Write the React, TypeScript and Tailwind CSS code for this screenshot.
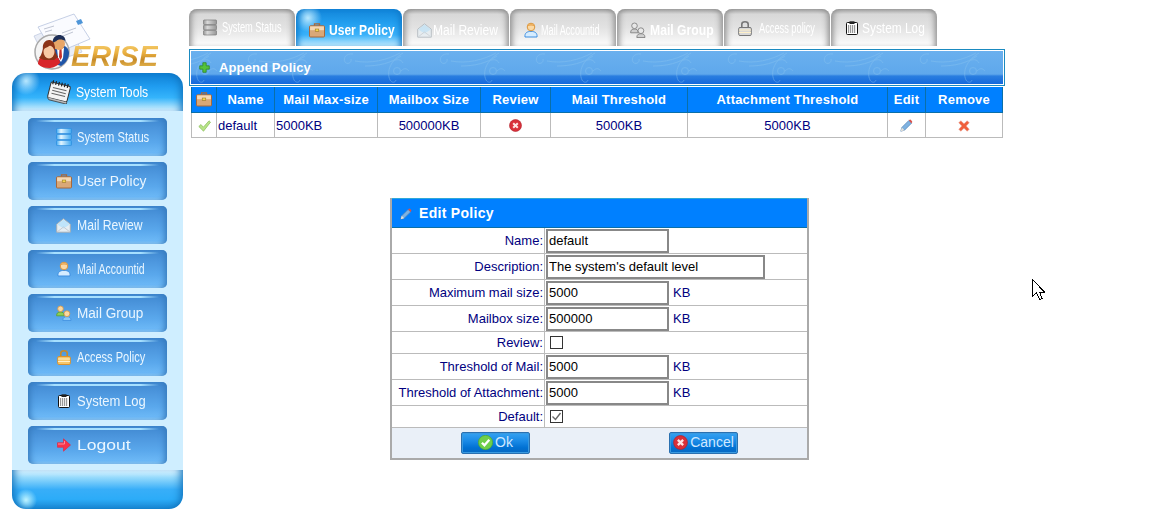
import React, { useId } from "react";

type IconProps = { className?: string };

const Database = ({ className = "w-[16px] h-[18px]", top = "#e4f6ff", mid = "#3fa8f2", edge = "#2a8ee0" }: IconProps & { top?: string; mid?: string; edge?: string }) => {
  const id = useId();
  return (
    <svg viewBox="0 0 16 18" className={className}>
      <defs>
        <linearGradient id={id} x1="0" x2="1" y1="0" y2="0">
          <stop offset="0" stopColor={mid} />
          <stop offset="0.3" stopColor={top} />
          <stop offset="1" stopColor={mid} />
        </linearGradient>
      </defs>
      {[0, 6, 12].map((y) => (
        <rect key={y} x="0.500" y={y + 0.400} width="15" height="5.200" rx="1" fill={`url(#${id})`} stroke={edge} strokeWidth="0.700" />
      ))}
    </svg>
  );
};

const Briefcase = ({ className = "w-[16px] h-[16px]" }: IconProps) => (
  <svg viewBox="0 0 16 16" className={className}>
    <path d="M5.500 3.800V1.800h5v2" fill="none" stroke="#a8683a" strokeWidth="1.300" />
    <rect x="0.500" y="3.800" width="15" height="11.200" rx="1" fill="#d9a878" stroke="#a8683a" />
    <rect x="1.100" y="4.400" width="13.800" height="3.800" fill="#f4d8b4" />
    <rect x="6.200" y="7" width="3.600" height="2.300" fill="#f7d84a" stroke="#8a6a20" strokeWidth="0.500" />
  </svg>
);

const Envelope = ({ className = "w-[15px] h-[15px]" }: IconProps) => (
  <svg viewBox="0 0 15 15" className={className}>
    <path d="M0.700 6.200 7.500 0.800l6.800 5.400v8H0.700z" fill="#e6eef3" stroke="#a5aeb5" />
    <path d="M1.200 6.400 7.500 10.600l6.300-4.200L7.500 1.400z" fill="#bfe4fa" />
    <path d="M1 14 7.500 9l6.500 5" fill="none" stroke="#c5ccd2" />
  </svg>
);

const User = ({ className = "w-[14px] h-[16px]" }: IconProps) => (
  <svg viewBox="0 0 14 16" className={className}>
    <path d="M1 15c-.5-4 2-5.600 6-5.600s6.500 1.600 6 5.600z" fill="#d5ecff" stroke="#3f8fe0" />
    <circle cx="7" cy="5" r="3.800" fill="#fbd9a4" stroke="#d9963f" />
    <path d="M3.400 4.200C4 1.600 10 1.600 10.600 4.200 8.500 3.200 5.500 3.200 3.400 4.200z" fill="#e8a24a" />
  </svg>
);

const Group = ({ className = "w-[16px] h-[16px]", a = "#8ccf55", b = "#8cc8f5", s1 = "#5a9f2a", s2 = "#3f8fe0", face = "#fbd9a4", fs = "#d9963f" }: IconProps & { a?: string; b?: string; s1?: string; s2?: string; face?: string; fs?: string }) => (
  <svg viewBox="0 0 16 16" className={className}>
    <path d="M.6 10.800c0-3 1.600-3.800 3.800-3.800s3.800.8 3.800 3.800z" fill={a} stroke={s1} strokeWidth=".8" />
    <circle cx="4.500" cy="3.800" r="2.800" fill={face} stroke={fs} strokeWidth=".8" />
    <path d="M6.800 15.500c0-3 1.700-3.800 4.100-3.800s4.100.8 4.100 3.800z" fill={b} stroke={s2} strokeWidth=".8" />
    <circle cx="10.900" cy="8.700" r="2.900" fill={face} stroke={fs} strokeWidth=".8" />
  </svg>
);

const Lock = ({ className = "w-[14px] h-[15px]", body = "#f6c66a", line = "#d9922e", shackle = "#c88a2a" }: IconProps & { body?: string; line?: string; shackle?: string }) => (
  <svg viewBox="0 0 14 15" className={className}>
    <path d="M3.800 7V3.300a3.200 2.500 0 0 1 6.400 0V7" fill="none" stroke={shackle} strokeWidth="1.600" />
    <rect x="0.700" y="6.500" width="12.600" height="8" rx="1.200" fill={body} stroke={line} />
    <path d="M1 9h12M1 11.500h12" stroke="#fff0c8" />
  </svg>
);

const Clipboard = ({ className = "w-[12px] h-[14px]" }: IconProps) => (
  <svg viewBox="0 0 12 14" className={className}>
    <rect x="0.500" y="1.500" width="11" height="12" rx="1" fill="#fff" stroke="#111" />
    <rect x="3.500" y="0.300" width="5" height="2.700" fill="#222" />
    <path d="M2 5h8M2 7h8M2 9h8M2 11h8" stroke="#333" strokeDasharray="1.200 .8" />
  </svg>
);

const ArrowRed = ({ className = "w-[14px] h-[14px]" }: IconProps) => (
  <svg viewBox="0 0 14 14" className={className}>
    <path d="M0.500 4.700H6.500V.8L13.500 7 6.500 13.200V9.300H.5z" fill="#f8324a" stroke="#e8203a" strokeWidth=".6" />
    <path d="M1 6H7.500V3" fill="none" stroke="#ff8a98" />
  </svg>
);

const Plus = () => (
  <svg viewBox="0 0 12 12" className="relative w-[11px] h-[11px]">
    <path d="M4.200.8h3.600v3.400h3.400v3.600H7.800v3.400H4.200V7.800H.8V4.200h3.400z" fill="#55c23a" stroke="#2f8a2a" strokeWidth=".9" />
  </svg>
);

const Check = () => (
  <svg viewBox="0 0 13 12" className="w-[13px] h-[12px]">
    <path d="M.8 6.500 3 4.500l2.300 2.700L11 .8l1.500 1.400-7 9z" fill="#b8e488" stroke="#86bc58" strokeWidth=".7" />
  </svg>
);

const CircleX = ({ className = "w-[13px] h-[13px]", fill = "#d9303a" }: IconProps & { fill?: string }) => (
  <svg viewBox="0 0 13 13" className={className}>
    <circle cx="6.500" cy="6.500" r="6" fill={fill} stroke="#b01e28" strokeWidth=".6" />
    <path d="M4.200 4.200l4.600 4.600M8.800 4.200 4.200 8.800" stroke="#ffe4e4" strokeWidth="2" />
  </svg>
);

const CircleOk = () => (
  <svg viewBox="0 0 13 13" className="w-[15px] h-[15px]">
    <circle cx="6.500" cy="6.500" r="6.200" fill="#6fcf4a" stroke="#4aa82e" strokeWidth=".6" />
    <path d="M3.400 6.700 5.600 9 9.800 4.200" fill="none" stroke="#fff" strokeWidth="2" />
  </svg>
);

const Pencil = ({ className = "w-[13px] h-[13px]" }: IconProps) => (
  <svg viewBox="0 0 13 13" className={className}>
    <path d="M.8 12.200 1.800 8.500 8.800 1.500 11.500 4.200 4.500 11.200z" fill="#7fb2e0" stroke="#4f80b5" strokeWidth=".7" />
    <path d="M8.800 1.500 10 .5c.5-.3 2.200 1.500 2.300 2.400L11.500 4.200z" fill="#d9504a" />
    <path d="M.8 12.200 1.800 8.500 4.500 11.200z" fill="#e8e2d8" />
  </svg>
);

const RedX = () => (
  <svg viewBox="0 0 12 12" className="w-[12px] h-[12px]">
    <path d="M2.800.8 6 3.800 9.200.8l2 2L8.200 6l3 3.200-2 2L6 8.200l-3.200 3-2-2L3.800 6l-3-3.200z" fill="#f0603c" stroke="#e8a090" strokeWidth=".6" />
  </svg>
);

const Notebook = () => (
  <svg viewBox="0 0 26 24" className="w-[26px] h-[24px]">
    <g transform="rotate(14 13 12)">
      <rect x="3" y="4" width="20" height="16" rx="1.500" fill="#f4f4f4" stroke="#333" />
      <path d="M5 2v4M8 2v4M11 2v4M14 2v4M17 2v4M20 2v4" stroke="#222" strokeWidth="1.200" />
      <path d="M6 9h14M6 12h14M6 15h14" stroke="#666" />
      <path d="M3 20l2 2h18v-2" fill="#bbb" stroke="#333" strokeWidth=".7" />
    </g>
  </svg>
);

const LogoArt = () => (
  <svg viewBox="30 8 62 62" className="w-[62px] h-[62px]">
    <path d="M32 34 66 20 80 50 46 62z" fill="#e9edf6" stroke="#bcc6de" strokeWidth=".7" />
    <path d="M36 25 72 12 88 37 52 52z" fill="#fafbff" stroke="#b8c4de" strokeWidth=".8" />
    <path d="M74 19l5-2 2 4-5 2z" fill="#4d95d8" />
    <path d="M42 27l10-3M43 30l7-2M60 31l14-5M61 34l10-4" stroke="#a6aec0" strokeWidth=".7" />
    <circle cx="50" cy="50" r="17" fill="#f4f4f4" stroke="#a9a9a9" strokeWidth="1.500" />
    <path d="M50 52c0-7 4-10 10-9 5 1 7 5 7 8 0 5-3 10-8 13l-6-2z" fill="#1f55a8" />
    <path d="M55 46h7l-1 10-2 4-3-4z" fill="#fff" />
    <path d="M57.500 47h2l.5 8-1.500 3-1.500-3z" fill="#c8302a" />
    <circle cx="57" cy="42" r="6" fill="#e8a668" />
    <path d="M50.500 41c0-6 4-8 7-8s6 2 6 6c-3-2-8-2-9 0z" fill="#1e2f58" />
    <path d="M36 62c0-6 4-9 11-9s11 3 11 8c-4 4-8 5-11 5-4 0-8-1-11-4z" fill="#d8252a" />
    <path d="M41 46c-1 6-3 9-4 10l5 2 10 0 4-3c-2-3-3-6-3-9-2-6-10-6-12 0z" fill="#8c3418" />
    <ellipse cx="47" cy="50" rx="5.500" ry="6.500" fill="#f7c9a4" />
    <path d="M41 47c3-1 7-3 8-5 1 2 3 4 4 5 0-7-3-9-6-9s-7 3-6 9z" fill="#8c3418" />
  </svg>
);

const Ornament = () => (
  <svg className="absolute inset-0 w-full h-full pointer-events-none" aria-hidden="true">
    <defs>
      <pattern id="orn" x="54" y="0" width="96" height="33" patternUnits="userSpaceOnUse">
        <g fill="none" stroke="#8cc6f0" strokeWidth="1" opacity="0.4">
          <path d="M12 3C5 2 2 7 4 11c2 3 7 1 6-3" />
          <path d="M14 10c16 3 32-1 45-8" />
          <path d="M24 15c14 0 26-3 36-10" />
          <path d="M62 2C50 9 45 20 49 29c2 3 5 3 6 0" />
          <circle cx="56" cy="20" r="3.500" />
          <path d="M60 20c4-4 6-2 8 0" />
          <path d="M52 10c4-2 8-2 10 2" />
        </g>
      </pattern>
    </defs>
    <rect width="100%" height="100%" fill="url(#orn)" />
  </svg>
);

const sideItems = [
  { label: "System Status", icon: <Database />, cls: "scale-x-[0.8]" },
  { label: "User Policy", icon: <Briefcase />, cls: "scale-x-[0.98]" },
  { label: "Mail Review", icon: <Envelope />, cls: "scale-x-[0.87]" },
  { label: "Mail Accountid", icon: <User />, cls: "scale-x-[0.75]" },
  { label: "Mail Group", icon: <Group />, cls: "scale-x-[0.97]" },
  { label: "Access Policy", icon: <Lock />, cls: "scale-x-[0.79]" },
  { label: "System Log", icon: <Clipboard />, cls: "scale-x-[0.93]" },
  { label: "Logout", icon: <ArrowRed />, cls: "scale-x-[1.25]" },
];

const grayDb = <Database className="w-[14px] h-[17px]" top="#d8d8d8" mid="#969696" edge="#707070" />;

const tabs = [
  { label: "System Status", icon: grayDb, cls: "scale-x-[0.66] text-[14px]", ml: "ml-[4px]", pad: "pt-[0px]" },
  { label: "User Policy", icon: <Briefcase />, cls: "scale-x-[0.86] text-[14px] font-bold", ml: "ml-[4px]", pad: "pt-[5px]", active: true },
  { label: "Mail Review", icon: <Envelope className="w-[15px] h-[15px] opacity-70" />, cls: "scale-x-[0.86] text-[14px]", ml: "ml-[1px]", pad: "pt-[5px]" },
  { label: "Mail Accountid", icon: <User />, cls: "scale-x-[0.65] text-[14px]", ml: "ml-[2px]", pad: "pt-[5px]" },
  { label: "Mail Group", icon: <Group a="#cfcfcf" b="#cfcfcf" s1="#777" s2="#777" face="#e8e8e8" fs="#777" />, cls: "scale-x-[0.87] text-[14px] font-bold", ml: "ml-[4px]", pad: "pt-[5px]" },
  { label: "Access policy", icon: <Lock body="#d8d8d8" line="#777" shackle="#777" />, cls: "scale-x-[0.66] text-[14px]", ml: "ml-[6px]", pad: "pt-[1px]" },
  { label: "System Log", icon: <Clipboard />, cls: "scale-x-[0.85] text-[14px]", ml: "ml-[2px]", pad: "pt-[1px]" },
];

const columns = [
  { w: "w-[25px]", head: <span className="flex justify-center"><Briefcase /></span>, cell: <span className="flex justify-center"><Check /></span> },
  { w: "w-[58px]", head: "Name", cell: <span className="block text-left pl-[1px]">default</span> },
  { w: "w-[103px]", head: "Mail Max-size", cell: <span className="block text-left pl-[1px]">5000KB</span> },
  { w: "w-[103px]", head: "Mailbox Size", cell: "500000KB" },
  { w: "w-[70px]", head: "Review", cell: <span className="flex justify-center"><CircleX /></span> },
  { w: "w-[137px]", head: "Mail Threshold", cell: "5000KB" },
  { w: "w-[200px]", head: "Attachment Threshold", cell: "5000KB" },
  { w: "w-[38px]", head: "Edit", cell: <span className="flex justify-center"><Pencil /></span> },
  { w: "w-[77px]", head: "Remove", cell: <span className="flex justify-center"><RedX /></span> },
];

const Box = ({ checked }: { checked?: boolean }) => (
  <span className="ml-[5px] w-[13px] h-[13px] border border-[#333] bg-white flex items-center justify-center">
    {checked && (
      <svg viewBox="0 0 11 11" className="w-[11px] h-[11px]">
        <path d="M1.500 5.500 4.500 8.500 9.500 2" fill="none" stroke="#666" strokeWidth="1.400" />
      </svg>
    )}
  </span>
);

const TextField = ({ value, wide }: { value: string; wide?: boolean }) => (
  <input
    readOnly
    defaultValue={value}
    className={`${wide ? "w-[219px]" : "w-[123px]"} mt-[1px] h-[24px] ml-[1px] border-2 border-[#888888] bg-white pl-[1px] text-[13px] text-black outline-none`}
  />
);

const Unit = () => <span className="ml-[4px] mt-[2px]">KB</span>;

const rows = [
  { label: "Name:", h: "h-[26px]", body: <TextField value="default" /> },
  { label: "Description:", h: "h-[26px]", body: <TextField value="The system's default level" wide /> },
  { label: "Maximum mail size:", h: "h-[26px]", body: <><TextField value="5000" /><Unit /></> },
  { label: "Mailbox size:", h: "h-[26px]", body: <><TextField value="500000" /><Unit /></> },
  { label: "Review:", h: "h-[22px]", body: <Box /> },
  { label: "Threshold of Mail:", h: "h-[26px]", body: <><TextField value="5000" /><Unit /></> },
  { label: "Threshold of Attachment:", h: "h-[26px]", body: <><TextField value="5000" /><Unit /></> },
  { label: "Default:", h: "h-[22px]", body: <Box checked /> },
];

const DlgButton = ({ icon, label }: { icon: React.ReactNode; label: string }) => (
  <button className="w-[69px] h-[22px] flex items-center justify-center gap-[2px] rounded-[2px] border border-[#2a70b0] bg-[linear-gradient(to_bottom,#35a2f2_0%,#1a8ae6_40%,#0070d2_75%,#0a68c0_100%)] text-[14px] text-[#cfe8ff] shadow-[inset_0_0_0_1px_#3a9ae0]">
    {icon}
    <span>{label}</span>
  </button>
);

export default function App() {
  return (
    <div className="relative flex h-[531px] w-[1154px] overflow-hidden bg-white font-['Liberation_Sans',Arial,sans-serif] text-[13px] text-[#000080]">
      {/* Sidebar */}
      <aside className="ml-[12px] w-[171px] shrink-0 pt-[10px]">
        <div className="relative h-[63px]">
          <div className="pl-[20px]">
            <LogoArt />
          </div>
          <span className="absolute left-[59px] top-[31px] bg-[linear-gradient(to_bottom,#f8d478_0%,#eab040_40%,#c68a28_62%,#f2c860_100%)] bg-clip-text text-[29px] leading-[30px] font-bold italic text-transparent">
            ERISE
          </span>
        </div>
        <div className="flex h-[38px] items-center rounded-t-[14px] bg-[radial-gradient(circle_14px_at_14px_8px,#b8e8ff_0%,rgba(184,232,255,0)_100%),linear-gradient(to_bottom,#0f7fd2_0%,#1f9cf0_35%,#35b4fb_65%,#a8e0fc_90%,#dff4ff_100%)] pl-[34px] shadow-[inset_8px_0_8px_-6px_#0f6fb8,inset_-8px_0_8px_-6px_#0f6fb8]">
          <Notebook />
          <span className="ml-[4px] origin-left scale-x-[0.87] whitespace-nowrap text-[14px] text-white">System Tools</span>
        </div>
        <nav className="flex h-[359px] flex-col gap-[6px] bg-[#cfeeff] px-[16px] pt-[7px]">
          {sideItems.map((it) => (
            <div
              key={it.label}
              className="relative flex h-[38px] shrink-0 items-center overflow-hidden rounded-[5px] bg-[linear-gradient(to_bottom,#3f88d0_0%,#4d97de_30%,#5aa8ec_65%,#6cb8f6_92%,#8cc8f4_100%)] pl-[27px] text-white shadow-[inset_6px_0_6px_-4px_#3579bb,inset_-6px_0_6px_-4px_#3579bb]"
            >
              <span className="absolute left-[8px] right-[8px] top-[2px] h-[2px] bg-[linear-gradient(to_right,rgba(160,220,255,0),#a6e0ff_15%,#a6e0ff_85%,rgba(160,220,255,0))]" />
              <span className="flex w-[17px] shrink-0 justify-center">{it.icon}</span>
              <span className={`ml-[5px] origin-left whitespace-nowrap text-[14px] text-[#eaf6ff] ${it.cls}`}>{it.label}</span>
            </div>
          ))}
        </nav>
        <div className="h-[39px] rounded-b-[14px] bg-[radial-gradient(circle_11px_at_14px_30px,#c0f4ff_0%,rgba(176,240,255,0)_100%),linear-gradient(to_bottom,#e2f5ff_0%,#9adcfc_18%,#38aef8_50%,#2cacf8_75%,#1784d0_100%)] shadow-[inset_8px_0_8px_-6px_#0f6fb8,inset_-8px_0_8px_-6px_#0f6fb8]" />
      </aside>

      {/* Main */}
      <main className="ml-[6px] w-[816px] shrink-0 pt-[9px]">
        <div className="flex gap-[1px]">
          {tabs.map((t) => (
            <div
              key={t.label}
              className={`flex h-[37px] w-[106px] shrink-0 items-center rounded-t-[8px] pl-[13px] ${t.pad} ${
                t.active
                  ? "bg-[radial-gradient(circle_14px_at_12px_9px,#b8e8ff_0%,rgba(184,232,255,0)_100%),linear-gradient(to_bottom,#1184d8_0%,#23a0f0_40%,#3bb2fa_70%,#c4ebfd_100%)] shadow-[inset_-6px_0_6px_-4px_#0f78c8,inset_6px_0_6px_-4px_#0f78c8]"
                  : "bg-[linear-gradient(to_bottom,#a0a0a0_0%,#d8d8d8_14%,#e2e2e2_50%,#f4f4f4_85%,#ffffff_100%)] shadow-[inset_6px_0_6px_-4px_#8a8a8a,inset_-6px_0_6px_-4px_#8a8a8a]"
              }`}
            >
              <span className="flex w-[16px] shrink-0 justify-center">{t.icon}</span>
              <span className={`${t.ml} origin-left whitespace-nowrap text-white ${t.cls}`}>{t.label}</span>
            </div>
          ))}
        </div>

        <div className="mt-[3px] w-[816px] border border-[#1a8ac0] bg-white p-[1px]">
          <div className="relative flex h-[33px] items-center bg-[linear-gradient(to_bottom,#6ab0ee_0%,#5fa8ec_70%,#2a7ee0_76%,#1468dc_100%)] pl-[8px]">
            <Ornament />
            <Plus />
            <span className="relative ml-[9px] font-bold tracking-[0.12px] text-white">Append Policy</span>
          </div>
        </div>

        <table className="ml-[2px] mt-[1px] w-[811px] table-fixed border-collapse">
          <thead>
            <tr className="h-[25px] bg-[#0080ff] text-white">
              {columns.map((c, i) => (
                <th key={i} className={`${c.w} border-x border-b border-[#0a6fa8] p-0 text-center text-[13px] font-bold tracking-[0.2px]`}>
                  {c.head}
                </th>
              ))}
            </tr>
          </thead>
          <tbody>
            <tr className="h-[25px]">
              {columns.map((c, i) => (
                <td key={i} className="border border-[#bbbbbb] p-0 pt-[2px] text-center">
                  {c.cell}
                </td>
              ))}
            </tr>
          </tbody>
        </table>

        <section className="ml-[201px] mt-[60px] w-[419px] border-2 border-t-0 border-[#aaaaaa]">
          <div className="flex h-[30px] items-center border-t border-b border-t-[#30a8d8] border-b-[#0a6fa8] bg-[#0080ff] pl-[8px] pt-[2px] text-[14px] font-bold tracking-[0.3px] text-white">
            <Pencil className="w-[12px] h-[12px]" />
            <span className="ml-[7px]">Edit Policy</span>
          </div>
          {rows.map((r) => (
            <div key={r.label} className={`flex ${r.h} items-center border-b border-[#bbbbbb]`}>
              <div className="flex h-full w-[153px] shrink-0 items-center justify-end border-r border-[#bbbbbb] pr-[1px] pt-[2px]">
                {r.label}
              </div>
              {r.body}
            </div>
          ))}
          <div className="flex h-[30px] items-center gap-[139px] bg-[#eaf0f8] pl-[69px]">
            <DlgButton icon={<CircleOk />} label="Ok" />
            <DlgButton icon={<CircleX className="w-[15px] h-[15px]" />} label="Cancel" />
          </div>
        </section>
      </main>

      {/* Mouse pointer */}
      <svg viewBox="0 0 13 22" className="absolute left-[1032px] top-[279px] h-[22px] w-[13px]" shapeRendering="crispEdges">
        <path d="M.5.500V17.500L4.500 13.500 7.500 20.500 10 19.500 7.500 13H12.500Z" fill="#fff" stroke="#000" />
      </svg>
    </div>
  );
}
